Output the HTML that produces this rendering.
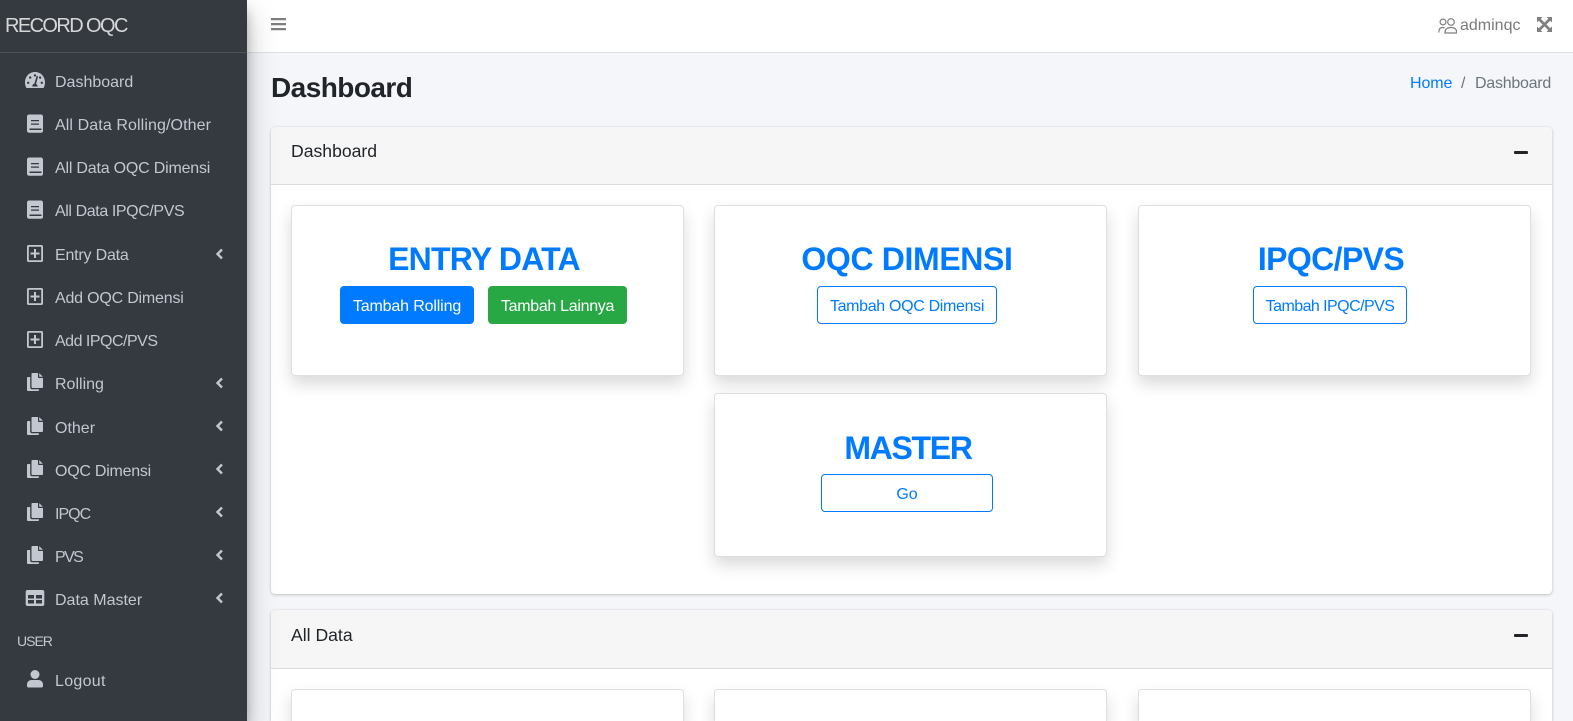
<!DOCTYPE html>
<html><head><meta charset="utf-8"><title>Dashboard</title>
<style>
*{box-sizing:border-box}
html,body{margin:0;padding:0;width:1573px;height:721px;overflow:hidden;background:#f4f6f9;font-family:"Liberation Sans",sans-serif;font-size:16px;color:#212529}
#root{position:relative;width:1573px;height:721px;overflow:hidden;background:#f4f6f9}
.a{position:absolute;white-space:nowrap}
#side{position:absolute;left:0;top:0;width:247px;height:721px;background:#343a40;box-shadow:0 14px 28px rgba(0,0,0,.25),0 10px 10px rgba(0,0,0,.22);z-index:5}
#brand{left:5px;top:13px;font-size:20px;line-height:26px;letter-spacing:-1.6px;color:rgba(255,255,255,.8)}
#bl{position:absolute;left:0;top:52px;width:247px;height:1px;background:#4b545c}
.n{position:absolute;left:55px;line-height:20px;color:#c2c7d0;white-space:nowrap}
.i{position:absolute;left:24px;width:22px;height:20px}
.c{position:absolute;left:215px;width:9px;height:12px}
#top{position:absolute;left:247px;top:0;width:1326px;height:53px;background:#fff;border-bottom:1px solid #dee2e6}
.card{position:absolute;background:#fff;border-radius:4px;box-shadow:0 0 1px rgba(0,0,0,.125),0 1px 3px rgba(0,0,0,.2)}
.hd{position:absolute;left:0;top:0;right:0;height:58px;background:#f6f6f6;border-bottom:1px solid #dcdcdc;border-radius:4px 4px 0 0}
.ht{position:absolute;left:20px;top:14px;line-height:20px;font-size:17.6px}
.min{position:absolute;right:24px;top:24px;width:14px;height:3px;background:#212529;border-radius:1px}
.box{position:absolute;background:#fff;border-radius:4px;border:1px solid #dfdfdf;box-shadow:0 8px 16px rgba(0,0,0,.15)}
.cut{height:32px;border-bottom:0;border-radius:4px 4px 0 0}
.h{position:absolute;left:0;width:384px;text-align:center;font-weight:700;font-size:32px;line-height:38px;color:#007bff}
.b{position:absolute;height:38px;line-height:40px;text-align:center;border:1px solid #007bff;border-radius:4px;font-size:16px;color:#007bff;white-space:nowrap}
.s{background:#007bff;color:#fff}
.g{background:#28a745;border-color:#28a745;color:#fff}
</style></head><body>
<svg width="0" height="0" style="position:absolute"><defs>
<symbol id="gauge" viewBox="0 0 22 20"><path fill="#c2c7d0" fill-rule="evenodd" d="M11 2C5 2 1 6.700 1 12.500c0 1.800.500 3.500 1.100 5 .2.300.5.500.9.500h16c.4 0 .7-.2.900-.5.600-1.500 1.100-3.200 1.100-5C21 6.700 17 2 11 2zM11 4.200a1.200 1.200 0 1 1 0 2.400 1.200 1.200 0 0 1 0-2.400zM4.200 14a1.200 1.200 0 1 1 0-2.400 1.200 1.200 0 0 1 0 2.400zm2-5.200a1.200 1.200 0 1 1 0-2.400 1.200 1.200 0 0 1 0 2.400zM13.700 16.500h-5.400c-.1-1.500 1-2.700 2-2.800L12.500 6.500c.1-.5.500-.7.900-.6.400.1.700.5.600.9L12 14c1 .5 1.800 1.400 1.700 2.500zM16 8.800a1.200 1.200 0 1 1 .2-2.400 1.200 1.200 0 0 1-.2 2.400zm1.800 5.200a1.200 1.200 0 1 1 0-2.400 1.200 1.200 0 0 1 0 2.400z"/></symbol>
<symbol id="book" viewBox="0 0 22 20"><path fill="#c2c7d0" fill-rule="evenodd" d="M5 .5h12c1.100 0 2 .9 2 2V17c0 1-.8 1.700-1.700 1.700H5c-1.100 0-2-.9-2-2V2.500C3 1.400 3.900.5 5 .5zM7 6v1.300h8V6zm0 3.500v1.300h8V9.500zM5.500 14.500V16h12v-1.500z"/></symbol>
<symbol id="plus" viewBox="0 0 22 20"><path fill="#c2c7d0" fill-rule="evenodd" d="M4.500 1h13c.9 0 1.500.7 1.500 1.500v14c0 .8-.6 1.500-1.500 1.500h-13C3.600 18 3 17.300 3 16.500v-14C3 1.700 3.600 1 4.500 1zm.3 1.800v13.400h12.400V2.800zM10 5h2v3.500h3.500v2H12V14h-2v-3.500H6.500v-2H10z"/></symbol>
<symbol id="copy" viewBox="0 0 22 20"><path fill="#c2c7d0" d="M8.500 1H14v4.200c0 .4.300.8.800.8H19v9c0 .6-.4 1-1 1H8.500c-.6 0-1-.4-1-1V2c0-.6.400-1 1-1zM15.200 1.100l3.700 3.700H15.200zM4 5H6.200v10.500c0 1 .8 1.800 1.800 1.800h7V18c0 .6-.4 1-1 1H4c-.6 0-1-.4-1-1V6c0-.6.400-1 1-1z"/></symbol>
<symbol id="table" viewBox="0 0 22 20"><path fill="#c2c7d0" fill-rule="evenodd" d="M3.500 2h15c1 0 1.800.8 1.800 1.800v12.400c0 1-.8 1.800-1.800 1.800h-15c-1 0-1.800-.8-1.800-1.800V3.800C1.700 2.800 2.500 2 3.500 2zm.5 5v3.500h6V7zm8 0v3.500h6V7zm-8 5v3.500h6V12zm8 0v3.500h6V12z"/></symbol>
<symbol id="user" viewBox="0 0 22 20"><circle cx="11" cy="5.500" r="4.500" fill="#c2c7d0"/><path fill="#c2c7d0" d="M7.500 11h7c2.500 0 4.500 2 4.500 4.500V17c0 .8-.7 1.500-1.500 1.500h-13C3.700 18.500 3 17.800 3 17v-1.500C3 13 5 11 7.500 11z"/></symbol>
<symbol id="chev" viewBox="0 0 9 12"><path fill="none" stroke="#c2c7d0" stroke-width="2.400" d="M7 1.500 2.500 6 7 10.500"/></symbol>
</defs></svg>
<div id="root">
<div id="side">
<div id="brand" class="a">RECORD OQC</div><div id="bl"></div>
<svg class="i" style="top:70px"><use href="#gauge"/></svg><div class="n" style="top:73px">Dashboard</div>
<svg class="i" style="top:114px"><use href="#book"/></svg><div class="n" style="top:116px;letter-spacing:.1px">All Data Rolling/Other</div>
<svg class="i" style="top:157px"><use href="#book"/></svg><div class="n" style="top:159px;letter-spacing:-.2px">All Data OQC Dimensi</div>
<svg class="i" style="top:200px"><use href="#book"/></svg><div class="n" style="top:202px;letter-spacing:-.4px">All Data IPQC/PVS</div>
<svg class="i" style="top:244px"><use href="#plus"/></svg><div class="n" style="top:246px;letter-spacing:-.2px">Entry Data</div><svg class="c" style="top:248px"><use href="#chev"/></svg>
<svg class="i" style="top:287px"><use href="#plus"/></svg><div class="n" style="top:289px;letter-spacing:-.2px">Add OQC Dimensi</div>
<svg class="i" style="top:330px"><use href="#plus"/></svg><div class="n" style="top:332px;letter-spacing:-.5px">Add IPQC/PVS</div>
<svg class="i" style="top:372px"><use href="#copy"/></svg><div class="n" style="top:375px">Rolling</div><svg class="c" style="top:377px"><use href="#chev"/></svg>
<svg class="i" style="top:416px"><use href="#copy"/></svg><div class="n" style="top:419px">Other</div><svg class="c" style="top:420px"><use href="#chev"/></svg>
<svg class="i" style="top:459px"><use href="#copy"/></svg><div class="n" style="top:462px;letter-spacing:-.25px">OQC Dimensi</div><svg class="c" style="top:463px"><use href="#chev"/></svg>
<svg class="i" style="top:502px"><use href="#copy"/></svg><div class="n" style="top:505px;letter-spacing:-1px">IPQC</div><svg class="c" style="top:506px"><use href="#chev"/></svg>
<svg class="i" style="top:545px"><use href="#copy"/></svg><div class="n" style="top:548px;letter-spacing:-1.6px">PVS</div><svg class="c" style="top:549px"><use href="#chev"/></svg>
<svg class="i" style="top:588px"><use href="#table"/></svg><div class="n" style="top:591px">Data Master</div><svg class="c" style="top:592px"><use href="#chev"/></svg>
<div class="n" style="left:17px;top:631px;font-size:14px;letter-spacing:-1px">USER</div>
<svg class="i" style="top:669px"><use href="#user"/></svg><div class="n" style="top:672px;letter-spacing:.3px">Logout</div>
</div>

<div id="top">
<svg class="a" style="left:24px;top:17px" width="15" height="14"><path fill="#7f7f7f" d="M0 1h15v2.200H0zM0 6h15v2.200H0zM0 11h15v2.200H0z"/></svg>
<svg class="a" style="left:1191px;top:17px" width="19" height="17" viewBox="0 0 19 17" fill="none" stroke="#7f7f7f" stroke-width="1.200"><circle cx="5" cy="5" r="2.900"/><circle cx="13" cy="5" r="3.300"/><path d="M1 15.500c-.4-3 1-5 3.500-5 .9 0 1.400.2 2 .6M7 16c-.3-3.500 2-5.500 6-5.500s6 2 5.500 5.500z"/></svg>
<div class="a" style="left:1213px;top:16px;line-height:20px;color:#7b7b7b">adminqc</div>
<svg class="a" style="left:1290px;top:17px" width="15" height="15" viewBox="0 0 15 15"><path fill="#7f7f7f" d="M0 0h5.500L3.700 1.800 7.500 5.600 11.300 1.800 9.500 0H15v5.500l-1.800-1.800L9.400 7.500l3.800 3.800L15 9.500V15H9.500l1.800-1.800-3.800-3.800-3.800 3.800L5.500 15H0V9.500l1.800 1.800 3.800-3.800L1.800 3.700 0 5.500z"/></svg>
</div>

<div class="a" style="left:271px;top:70px;font-size:28px;font-weight:700;line-height:36px;letter-spacing:-.55px;color:#212529">Dashboard</div>
<div class="a" style="left:1410px;top:74px;line-height:20px;letter-spacing:-.1px;color:#007bff">Home</div>
<div class="a" style="left:1461px;top:74px;line-height:20px;color:#6c757d">/</div>
<div class="a" style="left:1475px;top:74px;line-height:20px;letter-spacing:-.25px;color:#6c757d">Dashboard</div>

<div class="card" style="left:271px;top:127px;width:1281px;height:467px">
<div class="hd"><div class="ht">Dashboard</div><div class="min"></div></div>
<div class="box" style="left:20px;top:78px;width:393px;height:171px">
<div class="h" style="top:34px;letter-spacing:-.8px">ENTRY DATA</div>
<div class="b s" style="left:48px;top:80px;width:134px;letter-spacing:-.15px">Tambah Rolling</div>
<div class="b g" style="left:196px;top:80px;width:139px;letter-spacing:-.3px">Tambah Lainnya</div>
</div>
<div class="box" style="left:443px;top:78px;width:393px;height:171px">
<div class="h" style="top:34px;letter-spacing:-.36px">OQC DIMENSI</div>
<div class="b" style="left:102px;top:80px;width:180px;letter-spacing:-.33px">Tambah OQC Dimensi</div>
</div>
<div class="box" style="left:867px;top:78px;width:393px;height:171px">
<div class="h" style="top:34px;letter-spacing:-.6px">IPQC/PVS</div>
<div class="b" style="left:114px;top:80px;width:154px;letter-spacing:-.55px">Tambah IPQC/PVS</div>
</div>
<div class="box" style="left:443px;top:266px;width:393px;height:164px">
<div class="h" style="top:35px;width:386px;letter-spacing:-1.3px">MASTER</div>
<div class="b" style="left:106px;top:80px;width:172px">Go</div>
</div>
</div>

<div class="card" style="left:271px;top:610px;width:1281px;height:111px;border-radius:4px 4px 0 0">
<div class="hd" style="height:59px"><div class="ht" style="top:15px">All Data</div><div class="min"></div></div>
<div class="box cut" style="left:20px;top:79px;width:393px"></div>
<div class="box cut" style="left:443px;top:79px;width:393px"></div>
<div class="box cut" style="left:867px;top:79px;width:393px"></div>
</div>
</div>
</body></html>
